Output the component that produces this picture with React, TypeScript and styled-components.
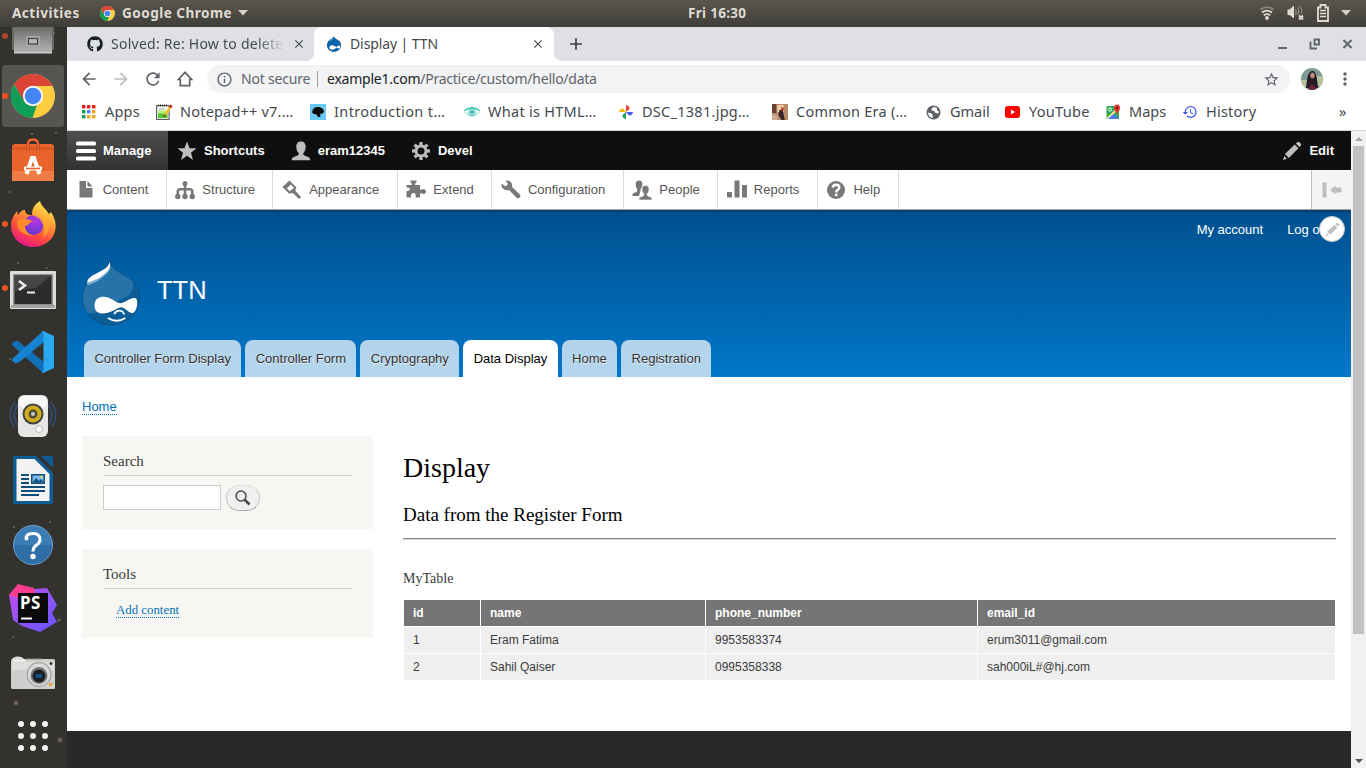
import React from "react";
import styled, { createGlobalStyle, css } from "styled-components";
import { FaGithub } from "react-icons/fa";
import {
  MdAdd,
  MdArrowBack,
  MdArrowForward,
  MdClose,
  MdHistory,
  MdInfoOutline,
  MdMoreVert,
  MdRefresh,
  MdStarBorder,
} from "react-icons/md";

const GlobalStyle = createGlobalStyle`
  *, *::before, *::after { box-sizing: border-box; }
  body { margin: 0; overflow: hidden; }
  svg { display: block; flex: none; }
`;

const ui = `"Noto Sans", "Open Sans", sans-serif`;
const sans = `"Liberation Sans", Arial, sans-serif`;
const serif = `"Liberation Serif", "Times New Roman", serif`;

/* ---------- desktop ---------- */

const Desktop = styled.div`
  width: 1366px;
  height: 768px;
  display: flex;
  flex-direction: column;
  overflow: hidden;
`;

const TopBar = styled.header`
  height: 27px;
  flex: none;
  display: grid;
  grid-template-columns: 676px auto 1fr;
  align-items: center;
  padding: 0 15px 1px 12px;
  color: #dfdbd2;
  font: bold 13.5px/26px ${ui};
  background: linear-gradient(#59564e, #403e39);
`;

const TopGroup = styled.div<{ $end?: boolean }>`
  display: flex;
  align-items: center;
  justify-content: ${(p) => (p.$end ? "flex-end" : "flex-start")};
`;

const Label = styled.span<{ $w: number; $ls?: number }>`
  display: block;
  flex: none;
  width: ${(p) => p.$w}px;
  letter-spacing: ${(p) => p.$ls ?? 0}px;
  white-space: nowrap;
`;

const Gap = styled.span<{ $w: number }>`
  flex: none;
  width: ${(p) => p.$w}px;
`;

const Workspace = styled.div`
  flex: 1;
  display: flex;
  min-height: 0;
`;

const Dock = styled.nav`
  width: 67px;
  flex: none;
  display: flex;
  flex-direction: column;
  background:
    radial-gradient(circle at 16px 676px, #6b625a 0 1.5px, transparent 3px),
    radial-gradient(circle at 60px 713px, #6b625a 0 1.5px, transparent 3px),
    radial-gradient(circle at 54px 6px, #67655f 0 0.7px, transparent 1.5px),
    radial-gradient(circle at 32px 107px, #67655f 0 0.7px, transparent 1.5px),
    radial-gradient(circle at 56px 106px, #5a5854 0 0.7px, transparent 1.5px),
    radial-gradient(circle at 10px 165px, #5a5854 0 0.7px, transparent 1.5px),
    radial-gradient(circle at 18px 236px, #5a5854 0 0.7px, transparent 1.5px),
    radial-gradient(circle at 47px 241px, #5a5854 0 0.7px, transparent 1.5px),
    radial-gradient(circle at 10px 332px, #5a5854 0 0.7px, transparent 1.5px),
    radial-gradient(circle at 50px 495px, #5a5854 0 0.7px, transparent 1.5px),
    radial-gradient(circle at 14px 500px, #5a5854 0 0.7px, transparent 1.5px),
    radial-gradient(circle at 59px 593px, #67655f 0 1px, transparent 2px),
    radial-gradient(circle at 13px 610px, #5a5854 0 0.7px, transparent 1.5px),
    #33322e;
`;

const DockSlot = styled.div<{ $short?: boolean; $active?: boolean; $running?: boolean; $drop?: number }>`
  position: relative;
  flex: none;
  height: ${(p) => (p.$short ? 37 : 64)}px;
  display: flex;
  justify-content: center;
  align-items: ${(p) => (p.$short ? "flex-start" : "center")};
  padding-right: 1px;
  padding-top: ${(p) => (p.$drop ?? 0) * 2}px;
  ${(p) =>
    p.$active &&
    css`
      background: #575653;
      background-clip: padding-box;
      border: 1px solid transparent;
      border-width: 1px 3px 1px 2px;
      border-radius: 5px;
    `}
  ${(p) =>
    p.$running &&
    css`
      &::before {
        content: "";
        position: absolute;
        left: ${p.$active ? 0 : 2}px;
        top: ${p.$short ? 6 : p.$active ? 28 : 29}px;
        width: 6px;
        height: 6px;
        border-radius: 50%;
        background: ${p.$short ? "#a8482b" : "#e95420"};
      }
    `}
`;

/* ---------- browser ---------- */

const Browser = styled.main`
  flex: 1;
  min-width: 0;
  display: flex;
  flex-direction: column;
  background: #fff;
`;

const TabStrip = styled.div`
  height: 34px;
  flex: none;
  display: flex;
  align-items: center;
  background: #dee0e6;
  font: 14px/34px ${ui};
  color: #45494d;
`;

const BrowserTab = styled.div<{ $active?: boolean }>`
  height: 34px;
  width: ${(p) => (p.$active ? 240 : 247)}px;
  display: flex;
  align-items: center;
  padding-left: ${(p) => (p.$active ? 12 : 20)}px;
  border-radius: ${(p) => (p.$active ? "8px 8px 0 0" : "0 0 8px 0")};
  background: ${(p) => (p.$active ? "#fff" : "#dee0e6")};
`;

const TabCorner = styled.div`
  height: 34px;
  width: 487px;
  flex: none;
  display: flex;
  background: linear-gradient(#dee0e6 50%, #fff 50%);
`;

const TabRest = styled.div`
  flex: 1;
  height: 34px;
  display: flex;
  align-items: center;
  padding: 0 13px 0 12px;
  border-radius: 0 0 0 8px;
  background: #dee0e6;
`;

const TabRestWrap = styled.div`
  flex: 1;
  display: flex;
  background: linear-gradient(#dee0e6 50%, #fff 50%);
`;

const FadedLabel = styled(Label)`
  overflow: hidden;
  mask-image: linear-gradient(90deg, #000 84%, transparent);
`;

const Spacer = styled.span`
  flex: 1;
`;

const Toolbar = styled.div`
  height: 36px;
  flex: none;
  display: flex;
  align-items: center;
  padding: 0 11px 0 12px;
  color: #5f6368;
`;

const NavIcons = styled.div`
  display: flex;
  gap: 12px;
  width: 128px;
  align-items: center;
  svg:last-child {
    margin-left: 2px;
  }
`;

const Omnibox = styled.div`
  flex: none;
  width: 1083px;
  height: 28px;
  border-radius: 14px;
  background: #f1f3f4;
  display: flex;
  align-items: center;
  padding: 0 10px 0 9px;
  font: 14px/28px ${ui};
`;

const Divider = styled.span`
  width: 1px;
  height: 16px;
  margin: 0 9px 0 7px;
  background: #9a9da1;
`;

const UrlHost = styled.span`
  color: #202124;
`;

const Bookmarks = styled.div`
  height: 34px;
  flex: none;
  display: flex;
  align-items: center;
  padding: 0 19px 3px 15px;
  border-bottom: 1px solid #d5d9d8;
  font: 14.5px/28px ${ui};
  color: #45494d;
`;

const Bookmark = styled.div<{ $w: number; $gap: number }>`
  flex: none;
  width: ${(p) => p.$w}px;
  display: flex;
  align-items: center;
  gap: ${(p) => p.$gap}px;
  white-space: nowrap;
`;

const BookmarkLabel = styled(Label)`
  padding-bottom: 2px;
`;

const Viewport = styled.div`
  flex: 1;
  min-height: 0;
  display: flex;
`;

const Page = styled.div`
  flex: 1;
  min-width: 0;
  display: flex;
  flex-direction: column;
  font-family: ${sans};
`;

const ScrollBar = styled.div`
  width: 15px;
  flex: none;
  display: flex;
  flex-direction: column;
  align-items: center;
  justify-content: space-between;
  background: #f1f1f1;
`;

const Thumb = styled.div`
  width: 11px;
  height: 488px;
  margin: 0 0 auto;
  background: #c1c1c1;
`;

const ScrollArrow = styled.div`
  height: 15px;
  display: flex;
  align-items: center;
`;

/* ---------- admin toolbar ---------- */

const AdminBar = styled.div`
  height: 39px;
  flex: none;
  display: flex;
  background: #0f0f0f;
  color: #fff;
  font: bold 13px/39px ${sans};
`;

const AdminItem = styled.div<{ $active?: boolean; $w?: number }>`
  display: flex;
  align-items: center;
  gap: 7px;
  padding: 0 17px 0 9px;
  width: ${(p) => (p.$w ? p.$w + "px" : "auto")};
  flex: none;
  ${(p) => p.$active && "background: linear-gradient(#4f4f4f, #323232);"}
`;

const Tray = styled.div`
  position: relative;
  z-index: 1;
  height: 40px;
  flex: none;
  display: flex;
  background: #fff;
  border-bottom: 1px solid #a5a59f;
  box-shadow: 0 0 4px 1px rgba(0, 0, 0, 0.33);
  clip-path: inset(0 0 -6px 0);
  color: #565656;
  font: 13px/39px ${sans};
`;

const TrayItem = styled.div`
  display: flex;
  align-items: center;
  gap: 7.08px;
  padding: 0 17.33px 0 8.67px;
  border-right: 1px solid #ddd;
`;

const TrayToggle = styled.div`
  width: 40px;
  margin-left: auto;
  display: flex;
  align-items: center;
  justify-content: center;
  background: #f5f5f5;
  border-left: 1px solid #bfbfba;
`;

/* ---------- site ---------- */

const SiteHeader = styled.header`
  height: 167px;
  flex: none;
  display: flex;
  flex-direction: column;
  background: linear-gradient(#00508f, #0077c8);
  color: #fff;
`;

const AccountMenu = styled.div`
  position: relative;
  height: 40px;
  display: flex;
  justify-content: flex-end;
  gap: 24px;
  padding-right: 20.5px;
  font: 13px/40px ${sans};
`;

const ContextButton = styled.div`
  position: absolute;
  right: 6px;
  top: 6px;
  width: 26px;
  height: 26px;
  border-radius: 50%;
  border: 1px solid #ccc;
  background: #fff;
  display: flex;
  align-items: center;
  justify-content: center;
`;

const Branding = styled.div`
  height: 90px;
  display: flex;
  padding: 11px 0 0 14.5px;
  gap: 17.5px;
`;

const SiteName = styled.div`
  font: 25.5px/30px ${sans};
  padding-top: 14px;
`;

const MainMenu = styled.nav`
  display: flex;
  gap: 4px;
  padding-left: 17px;
  height: 37px;
`;

const MenuTab = styled.div<{ $active?: boolean }>`
  padding: 0 10.4px;
  border-radius: 8px 8px 0 0;
  background: ${(p) => (p.$active ? "#fff" : "rgba(255, 255, 255, 0.7)")};
  color: ${(p) => (p.$active ? "#000" : "#333")};
  text-shadow: ${(p) => (p.$active ? "none" : "0 1px #eee")};
  font: 13px/38px ${sans};
`;

const Body = styled.div`
  height: 354px;
  flex: none;
  display: flex;
  flex-direction: column;
  background: #fff;
  padding: 0 15px;
  color: #3b3b3b;
`;

const Breadcrumb = styled.div`
  height: 59px;
  padding-top: 22px;
  font: 13px/15px ${sans};
`;

const DottedLink = styled.span`
  display: inline-block;
  color: #0071b3;
  border-bottom: 1px dotted #0071b3;
`;

const Columns = styled.div`
  display: flex;
  gap: 30px;
`;

const Sidebar = styled.aside`
  width: 291px;
  flex: none;
  display: flex;
  flex-direction: column;
  gap: 20px;
`;

const Block = styled.section<{ $h: number }>`
  height: ${(p) => p.$h}px;
  padding: 15px 21px;
  background: #f6f6f2;
  font: 12.85px/15px ${serif};
`;

const BlockTitle = styled.h2`
  margin: 0 0 9px;
  height: 25px;
  border-bottom: 1px solid #d3d3d1;
  font: 15px/20px ${serif};
`;

const SearchRow = styled.div`
  display: flex;
  gap: 5px;
`;

const SearchInput = styled.input`
  width: 118px;
  height: 25px;
  padding: 4px;
  border: 1px solid #ccc;
  background: #fff;
`;

const SearchButton = styled.button`
  width: 34px;
  height: 26px;
  padding: 0 1px 1px 0;
  display: flex;
  align-items: center;
  justify-content: center;
  border: 1px solid #ccc;
  border-color: #e0e0e0 #c8c8c8 #a9a9a9;
  border-radius: 13px;
  background: #f0f0f0;
`;

const ToolLink = styled.div`
  padding: 5px 0 0 13px;
  line-height: 14px;
`;

const Content = styled.section`
  flex: 1;
  font-family: ${serif};
`;

const PageTitle = styled.h1`
  margin: 0;
  padding-top: 15px;
  font: 28px/34px ${serif};
  color: #000;
`;

const SubTitle = styled.h2`
  margin: 0;
  padding-top: 19px;
  height: 53px;
  font: 19px/22px ${serif};
  color: #000;
`;

const Rule = styled.hr`
  margin: 0;
  height: 2px;
  border: 0;
  border-top: 1px solid #848484;
  border-bottom: 1px solid #d8d8d8;
`;

const TableCaption = styled.div`
  padding-top: 29px;
  height: 59px;
  font: 14px/20px ${serif};
`;

const Grid = styled.table`
  width: 933px;
  table-layout: fixed;
  border-spacing: 1px;
  font: 12px/14px ${sans};
  th,
  td {
    height: 26px;
    padding: 0 9px;
    text-align: left;
    vertical-align: middle;
  }
  th {
    background: #757575;
    color: #fff;
  }
  td {
    background: #efefef;
  }
`;

const Footer = styled.footer`
  flex: 1;
  background: #292929;
`;

/* ---------- drawings ---------- */

const ChromeIcon = ({ size }: { size: number }) => (
  <svg width={size} height={size} viewBox="0 0 44 44">
    <circle cx="22" cy="22" r="22" fill="#ffcd40" />
    <path d="M22 0A22 22 0 0 1 41.5 12H22L12.5 27 3.2 10.5A22 22 0 0 1 22 0Z" fill="#db4437" />
    <path d="M3.2 10.5 13.3 27.5A10 10 0 0 0 26 31L21.5 44A22 22 0 0 1 3.2 10.5Z" fill="#0f9d58" />
    <circle cx="22" cy="22" r="10.2" fill="#f4f4f4" />
    <circle cx="22" cy="22" r="8.2" fill="#4285f4" />
  </svg>
);

const FilesIcon = () => (
  <svg width="42" height="27" viewBox="0 0 42 27">
    <defs>
      <linearGradient id="files" x1="0" y1="0" x2="0" y2="1">
        <stop offset="0" stopColor="#6c6c6a" />
        <stop offset="1" stopColor="#b5b5b4" />
      </linearGradient>
    </defs>
    <path d="M0 0H42V23H0Z" fill="#666664" />
    <path d="M2 0H40V26H2Z" fill="url(#files)" />
    <path d="M2 25H40V26.5H2Z" fill="#d0d0d0" />
    <rect x="14" y="9" width="14" height="11" rx="2" fill="#a8a8a6" />
    <rect x="16.5" y="11.5" width="9" height="5.5" fill="#b9b9b7" stroke="#3c3c3a" strokeWidth="1.2" />
  </svg>
);

const SoftwareIcon = () => (
  <svg width="42" height="44" viewBox="0 0 42 44">
    <path d="M0 8 2 6H40L42 8V43H0Z" fill="#e8642b" />
    <path d="M0 9H42V12H0Z" fill="#d95a22" />
    <path d="M0 33H42V43H0Z" fill="#ef7d45" />
    <path d="M16 13V6Q16 1.500 21 1.500T26 6V13" fill="none" stroke="#b8441a" strokeWidth="3" />
    <path d="M16 13V6Q16 1.500 21 1.500T26 6V13" fill="none" stroke="#f0703a" strokeWidth="1.400" />
    <path d="M14.500 36 20 20H22L27.500 36" fill="none" stroke="#fff" strokeWidth="4" />
    <path d="M12 30.500H30" stroke="#fff" strokeWidth="4" />
    <path d="M14 30.500H28" stroke="#e8642b" strokeWidth="1.600" />
  </svg>
);

const FirefoxIcon = () => (
  <svg width="45" height="46" viewBox="0 0 45 46">
    <defs>
      <linearGradient id="fox" x1="0.8" y1="0" x2="0.3" y2="1">
        <stop offset="0" stopColor="#fff44f" />
        <stop offset="0.35" stopColor="#ffa436" />
        <stop offset="0.7" stopColor="#ff4a3d" />
        <stop offset="1" stopColor="#e5148f" />
      </linearGradient>
      <radialGradient id="globe" cx="0.6" cy="0.3" r="0.8">
        <stop offset="0" stopColor="#b833e1" />
        <stop offset="1" stopColor="#5a3ad0" />
      </radialGradient>
    </defs>
    <path d="M29 0C30 5 35 8 38 13L40 11C46 20 46 29 41 37 36 43 29 46 22 46 9 46 0 36 0 25 0 17 4 13 6 10L7 14C10 10 11 9 14 9 14 12 16 14 21 14 21 7 24 3 29 0Z" fill="url(#fox)" />
    <circle cx="22.500" cy="24" r="10" fill="url(#globe)" />
    <path d="M6 21C10 16 15 18 22 20 18 21 19 24 14 25 14 30 18 34 23 34.500 16 36 9 31 7 27 5 25 6 21Z" fill="#ff8a2a" />
    <path d="M21 14C28 12 38 17 38 25 38 30 35 35 31 37 34 32 34 26 31 22 29 17 25 16 21 14Z" fill="#ffb02e" opacity="0.700" />
  </svg>
);

const TerminalIcon = () => (
  <svg width="46" height="38" viewBox="0 0 46 38">
    <rect x="0" y="0" width="46" height="38" rx="1" fill="#dcdcdc" />
    <rect x="1" y="34" width="44" height="3" fill="#a4a4a2" />
    <rect x="3" y="3" width="40" height="31" fill="#8f908e" />
    <rect x="4.500" y="4.500" width="37" height="28.500" fill="#2a2b2a" />
    <path d="M4.500 4.500H41.500L26 17 4.500 20Z" fill="#444645" />
    <path d="M9 10 15 14.500 9 19" fill="none" stroke="#eee" strokeWidth="2.500" />
    <path d="M17 21.500H25" stroke="#eee" strokeWidth="2" />
  </svg>
);

const CodeIcon = () => (
  <svg width="42" height="42" viewBox="0 0 42 42">
    <path d="M0 12.500 3 10 6 10 32 31V42L30 41 0 14Z" fill="#0f70b7" />
    <path d="M0 29.500 3 32 6 32 32 11V0L30 1 0 28Z" fill="#1583cf" />
    <path d="M31 0 42 5V37L31 42 29.500 41 31.500 40V2L29.500 1Z" fill="#29a9f2" />
  </svg>
);

const SpeakerIcon = () => (
  <svg width="48" height="44" viewBox="0 0 48 44">
    <path d="M6 8Q-3 20 5 33M42 8Q51 20 43 33M9 10Q2 20 8 31M39 10Q46 20 40 31" fill="none" stroke="#344766" strokeWidth="2" />
    <rect x="9" y="1" width="30" height="42" rx="6" fill="#e6e6e4" />
    <rect x="10" y="2" width="28" height="12" rx="5" fill="#f8f8f8" />
    <circle cx="24" cy="20" r="10.500" fill="#444" />
    <circle cx="24" cy="20" r="8.500" fill="#d2ad1b" />
    <circle cx="24" cy="20" r="4.500" fill="#514b38" />
    <circle cx="24" cy="20" r="2" fill="#c9c9c9" />
    <circle cx="30" cy="35" r="3.500" fill="#fafafa" stroke="#b7b7b7" />
  </svg>
);

const WriterIcon = () => (
  <svg width="40" height="48" viewBox="0 0 40 48">
    <path d="M2 0H23L40 17V46Q40 48 38 48H2Q0 48 0 46V2Q0 0 2 0Z" fill="#0d5c93" />
    <path d="M28 0H38Q40 0 40 2V12Z" fill="#0d5c93" />
    <path d="M3.500 3H21.500L36.500 18V45H3.500Z" fill="#f2f2f2" />
    <path d="M8 19H16M8 23H16M8 27H16M8 31H32M8 35H32M8 39H26" stroke="#124f79" strokeWidth="2" />
    <rect x="18" y="18" width="14" height="10" fill="#124f79" />
    <rect x="19.500" y="19.500" width="11" height="7" fill="#76b9e8" />
    <path d="M19.500 26.500 23 22 26 25 28 23 30.500 26.500Z" fill="#124f79" />
    <circle cx="28.500" cy="21" r="1.200" fill="#f3d44a" />
  </svg>
);

const HelpIcon = () => (
  <svg width="40" height="40" viewBox="0 0 40 40">
    <circle cx="20" cy="20" r="19.500" fill="#3b7db5" stroke="#6fa3cc" />
    <path d="M1 20A19 19 0 0 0 39 20Z" fill="#2f6ea5" />
    <path d="M13 13Q13.500 8.500 20 8.500 27 8.500 27 14.500 27 18 23 20.500 20 22.500 20 26.500" fill="none" stroke="#fff" strokeWidth="3" />
    <circle cx="13.500" cy="13.500" r="2" fill="#fff" />
    <circle cx="20" cy="31.500" r="2.700" fill="#fff" />
  </svg>
);

const StormIcon = () => (
  <svg width="48" height="48" viewBox="0 0 48 48">
    <defs>
      <linearGradient id="storm" x1="0" y1="0" x2="0.8" y2="1">
        <stop offset="0" stopColor="#c44de8" />
        <stop offset="1" stopColor="#6b57ff" />
      </linearGradient>
    </defs>
    <path d="M0 11 9 1 25 5 38 4 48 21 43 29 48 38 31 48 13 42 4 36Z" fill="url(#storm)" />
    <path d="M0 11 9 0 25 4 26 12H9V14Z" fill="#fb3b8e" />
    <rect x="9" y="9" width="30" height="30" fill="#0a0a0a" />
    <text x="11" y="25" fontFamily="Noto Sans, sans-serif" fontWeight="bold" fontSize="17" letterSpacing="0.500" fill="#fff">PS</text>
    <path d="M12 34.500H23" stroke="#fff" strokeWidth="2" />
  </svg>
);

const CameraIcon = () => (
  <svg width="44" height="34" viewBox="0 0 44 34">
    <ellipse cx="7" cy="3.500" rx="6" ry="3" fill="#ddd" />
    <rect x="0" y="3" width="44" height="30" rx="1.500" fill="#cfcfcd" />
    <rect x="1" y="6" width="42" height="8" fill="#dededc" />
    <path d="M2 4.500H14" stroke="#f5f5f5" strokeWidth="2" />
    <path d="M15 3H31" stroke="#8a8a88" />
    <circle cx="28" cy="18.500" r="12.500" fill="#a0a09f" />
    <circle cx="28" cy="18.500" r="11.200" fill="#dadada" />
    <circle cx="28" cy="19.500" r="8.500" fill="#777" />
    <circle cx="28" cy="20" r="6.500" fill="#1b1d22" />
    <path d="M24.500 18H31V22H24.500Z" fill="#174b84" />
    <circle cx="40" cy="7.500" r="1.500" fill="#333" />
    <rect x="38" y="27" width="3" height="3" fill="#e9a03a" />
  </svg>
);

const AppGridIcon = () => (
  <svg width="30" height="30" viewBox="0 0 30 30" fill="#f2f2f2">
    {[3, 15, 27].map((y) => [3, 15, 27].map((x) => <circle key={`${x}-${y}`} cx={x} cy={y} r="3" />))}
  </svg>
);

const Caret = () => (
  <svg width="10" height="6" viewBox="0 0 10 6">
    <path d="M0 0H10L5 5.500Z" fill="#d5d1c8" />
  </svg>
);

const WifiIcon = () => (
  <svg width="14" height="14" viewBox="0 0 14 14" fill="none" stroke="#dfdbd2" strokeWidth="1.700">
    <path d="M0.500 3.500Q7-1 13.500 3.500" stroke="#8c8981" />
    <path d="M2 6.500Q7 2.800 12 6.500M3.800 9.200Q7 7 10.200 9.200" />
    <circle cx="7" cy="12" r="1.900" fill="#dfdbd2" stroke="none" />
  </svg>
);

const VolumeIcon = () => (
  <svg width="17" height="16" viewBox="0 0 17 16">
    <path d="M0.500 4.500H2.500L7 0.500V13.500L2.500 10H0.500Z" fill="#dfdbd2" />
    <path d="M8.500 4Q10 7 8.500 10M10.500 2Q13 7 10.500 10M12.500 0.500Q16 5 14 9" fill="none" stroke="#8c8981" strokeWidth="1.200" />
    <path d="M12 10.500 16 14.500M16 10.500 12 14.500" stroke="#dfdbd2" strokeWidth="2" />
  </svg>
);

const BatteryIcon = () => (
  <svg width="12" height="18" viewBox="0 0 12 18">
    <path d="M3.500 1H8.500V3.500H11V17H1V3.500H3.500Z" fill="none" stroke="#dfdbd2" strokeWidth="1.800" />
    <path d="M3 6.500H9M3 9.500H9M3 12.500H9" stroke="#dfdbd2" strokeWidth="1.400" />
  </svg>
);

const HomeIcon = () => (
  <svg width="16" height="16" viewBox="0 0 16 16">
    <path d="M1.300 8.500 8 1.300 14.700 8.500H12.700V14.700H3.300V8.500Z" fill="none" stroke="#5f6368" strokeWidth="1.700" />
  </svg>
);

const dropPath =
  "M27 0C28 5 32 8.500 38 12 51 19 57 25 57 36 57 52 44 64 28.500 64 12 64 0 52 0 36 0 24 8 17 16 12 22 8 26 6 27 0Z";

const DropIcon = () => (
  <svg width="16" height="16" viewBox="-4 0 65 64">
    <path d={dropPath} fill="#0a62a8" />
    <path d="M10 46C10 36 22 34 38 44 50 35 55 38 53 46 50 54 44 49 38 46 27 58 10 58 10 46Z" fill="#fff" />
    <path d="M6 20 27 6 20 17Z" fill="#69aee0" />
  </svg>
);

const DropLogo = () => (
  <svg width="58" height="65" viewBox="-0.500 0 58 65">
    <defs>
      <clipPath id="drop">
        <path d={dropPath} />
      </clipPath>
    </defs>
    <path d={dropPath} fill="#0c5c95" />
    <g clipPath="url(#drop)">
      <path d="M-2 -2H50C53 20 52 36 42 37L26 44Q16 54 4 52H-2Z" fill="#2573a9" />
      <path d="M50 18C53 30 46 35 42 37L58 40V20Z" fill="#0c5c95" />
    </g>
    <path d={dropPath} fill="none" stroke="#0f4f83" strokeWidth="0.800" />
    <path d="M27 1C28.500 6 28 9 25 12 19 18 11 23 5 24 3 20 8 15 15 12 21 8.500 26 7 27 1Z" fill="#86b0cf" />
    <path d="M27 1C28 6 27 8.500 24 11 18 17 11 20 5 21.500 4.500 18 9 14.500 15 12 21 8.500 26 7 27 1Z" fill="#fff" />
    <path d="M12 44.500C12 34 23 34 30 38.500 36 42.500 38 43 42 41 46 38.500 50 36.500 53 37 56 39 55 47 52 51 49 54 46 50 41 47 38 45 35 48 30 50 22 54 12 54 12 44.500Z" fill="#fff" />
    <path d="M31.500 53Q35 48 40 50.500L42 53.500" fill="none" stroke="#fff" strokeWidth="1.600" />
    <path d="M25.500 57Q34 62.500 43 57" fill="none" stroke="#fff" strokeWidth="1.800" />
  </svg>
);

const AppsGlyph = () => {
  const colors = ["#ea1b1b", "#ea1b1b", "#ea1b1b", "#0f9d58", "#4285f4", "#f4a71c", "#0f9d58", "#f4a71c", "#f4a71c"];
  return (
    <svg width="14" height="14" viewBox="0 0 14 14">
      {colors.map((c, i) => (
        <rect key={i} x={(i % 3) * 5} y={Math.floor(i / 3) * 5} width="3.400" height="3.400" fill={c} />
      ))}
    </svg>
  );
};

const NotepadGlyph = () => (
  <svg width="17" height="16" viewBox="0 0 17 16">
    <rect x="0.600" y="1.600" width="12.500" height="13.800" fill="#f4f8ec" stroke="#4a4a4a" />
    <path d="M2 6.500H11.500V14H2Z" fill="#b6f07a" />
    <path d="M2 9.500H11.500V14H2Z" fill="#4fc832" />
    <path d="M2 1.500H12" stroke="#333" strokeWidth="2" strokeDasharray="1 1" />
    <path d="M3 5H9" stroke="#999" strokeWidth="0.800" />
    <path d="M8 12.500 14 3.500" stroke="#f1c232" strokeWidth="2.400" />
    <path d="M8 12.500 9 11" stroke="#333" strokeWidth="2" />
    <path d="M14 3.500 15.500 1.200" stroke="#d22" strokeWidth="2.800" />
  </svg>
);

const HeadGlyph = () => (
  <svg width="16" height="16" viewBox="0 0 16 16">
    <rect width="16" height="16" fill="#69c9f5" />
    <path d="M2 8.500C3 4 5 3 8 3 11 2.500 14 5 14 8L12.500 9.500 10 10 10.500 13H8L6.500 10.500 4 10Z" fill="#0a0a0a" />
  </svg>
);

const EyeGlyph = () => (
  <svg width="16" height="10" viewBox="0 0 16 10" fill="none" stroke="#35bdb2">
    <path d="M0 4Q8-2.500 16 4" strokeWidth="1.300" />
    <circle cx="8" cy="5" r="3.300" />
    <circle cx="8" cy="5" r="1.500" fill="#35bdb2" />
    <path d="M1 5Q4 9 8 9T15 5" strokeWidth="0.600" />
  </svg>
);

const PhotosGlyph = () => (
  <svg width="14" height="14" viewBox="0 0 14 14">
    <path d="M7 7V0Q11 1 10.500 4Z" fill="#ea4335" />
    <path d="M7 7H14Q13 11 10 10.500Z" fill="#4759f5" />
    <path d="M7 7V14Q3 13 3.500 10Z" fill="#21a35a" />
    <path d="M7 7H0Q1 3 4 3.500Z" fill="#fbbc05" />
  </svg>
);

const PaintingGlyph = () => (
  <svg width="16" height="16" viewBox="0 0 15 16" preserveAspectRatio="none">
    <rect width="15" height="16" fill="#b98a68" />
    <path d="M0 0H4V9H0Z" fill="#6b3f31" />
    <path d="M5 1H11V8H5Z" fill="#ecd0a2" />
    <path d="M7 6H10L12 16H9L6 11Z" fill="#33262a" />
    <path d="M8.500 3.500H11V6.500H8.500Z" fill="#c0392b" />
    <path d="M0 11H5V16H0Z" fill="#cfae92" />
  </svg>
);

const GlobeGlyph = () => (
  <svg width="15" height="15" viewBox="0 0 15 15">
    <circle cx="7.500" cy="7.500" r="7" fill="#5f6368" />
    <path d="M8.500 1.800 5.800 3.200 5.500 5.500 8 5.800 9.500 8 12.500 8.500 13 6.500 11 5.500 11 3.200Z" fill="#fff" />
    <path d="M1.600 7.500 5 8.200 6.800 10 6.500 13.200 3.500 11.700Z" fill="#fff" />
  </svg>
);

const TubeGlyph = () => (
  <svg width="15" height="12" viewBox="0 0 14 11">
    <rect width="14" height="11" rx="2.500" fill="#f00" />
    <path d="M5.500 3.200 9.500 5.500 5.500 7.800Z" fill="#fff" />
  </svg>
);

const MapsGlyph = () => (
  <svg width="15" height="16" viewBox="0 0 15 16">
    <rect x="0.500" y="2" width="12.500" height="13" rx="1" fill="#31a853" />
    <path d="M1 15 7 9 13 15Z" fill="#4c7df0" />
    <path d="M0.500 14 12 3 13 5 2 15Z" fill="#f5e6a0" />
    <path d="M11 0.500C8 0.500 7.500 4 8.500 6L11 10 13.500 6C15 4 14 0.500 11 0.500Z" fill="#e8372c" />
    <circle cx="11" cy="4" r="1.200" fill="#7b1410" />
    <circle cx="4" cy="5.500" r="1.600" fill="none" stroke="#fff" />
  </svg>
);

const Avatar = () => (
  <svg width="22" height="22" viewBox="0 0 22 22">
    <defs>
      <clipPath id="face">
        <circle cx="11" cy="11" r="11" />
      </clipPath>
    </defs>
    <g clipPath="url(#face)">
      <rect width="22" height="22" fill="#7f9c94" />
      <path d="M0 12H6V22H0ZM16 8H22V18H16Z" fill="#b6c3a0" />
      <path d="M5 20C6 10 7 3 11.500 3 15 3 16 9 17 20Z" fill="#251d23" />
      <ellipse cx="11.500" cy="7.500" rx="2.200" ry="3" fill="#bb8d7f" />
      <path d="M7 22Q11 11 16 22Z" fill="#6a2040" />
    </g>
  </svg>
);

const MenuBars = () => (
  <svg width="20" height="20" viewBox="0 0 20 20" fill="#fff">
    <rect y="0.500" width="20" height="4" rx="1.500" />
    <rect y="8" width="20" height="4" rx="1.500" />
    <rect y="15.500" width="20" height="4" rx="1.500" />
  </svg>
);

const StarGlyph = () => (
  <svg width="20" height="20" viewBox="0 0 20 20" fill="#bebebe">
    <path d="M10 0.500 12.600 7.200H19.500L14 11.700 16 19 10 14.700 4 19 6 11.700 0.500 7.200H7.400Z" />
  </svg>
);

const PersonGlyph = () => (
  <svg width="20" height="20" viewBox="0 0 20 20" fill="#bebebe">
    <path d="M10 0.500C13 0.500 14.800 2.500 14.700 6 14.600 9 13.500 11 12.200 12.300 12 14 13 14.500 15.500 15.200 18 16 19.300 17 19.300 19.300H0.700C0.700 17 2 16 4.500 15.200 7 14.500 8 14 7.800 12.300 6.500 11 5.400 9 5.300 6 5.200 2.500 7 0.500 10 0.500Z" />
  </svg>
);

const GearGlyph = () => (
  <svg width="20" height="20" viewBox="0 0 20 20" fill="none" stroke="#bebebe">
    <circle cx="10" cy="10" r="5" strokeWidth="3" />
    {[0, 45, 90, 135, 180, 225, 270, 315].map((a) => (
      <path key={a} d="M10 4.500V1" strokeWidth="3.200" transform={`rotate(${a} 10 10)`} />
    ))}
  </svg>
);

const PencilGlyph = ({ size }: { size: number }) => (
  <svg width={size} height={size} viewBox="0 0 20 20" fill="#bebebe">
    <path d="M13.800 2.500 15.300 1.200Q16.500 0.400 17.700 1.500L18.700 2.600Q19.600 3.800 18.600 4.900L17.400 6.100ZM12.700 3.500 16.400 7.200 6.900 17 2.900 13.100ZM2.300 15 5 17.700 1 19Z" />
  </svg>
);

const trayGlyphs: Record<string, React.ReactNode> = {
  Content: <path d="M3.500 1H10V8H16.500V17.500H3.500ZM11.500 1 16.500 6.500H11.500Z" />,
  Structure: (
    <>
      <circle cx="10" cy="3.500" r="2.500" />
      <circle cx="2.800" cy="16.500" r="2.700" />
      <circle cx="10" cy="16.500" r="2.700" />
      <circle cx="17.200" cy="16.500" r="2.700" />
      <path d="M10 4V15M2.800 15V11.500Q2.800 9.300 5 9.300H15Q17.200 9.300 17.200 11.500V15" fill="none" stroke="#787878" strokeWidth="2.600" />
    </>
  ),
  Appearance: (
    <path fillRule="evenodd" d="M7.500 0.500 14.500 7.500Q13 9.500 13.500 11L19 17 17 19 11.500 13.500Q9 12.500 7.500 14L0.500 7ZM9 4.500 4.800 8.300 7.500 11.300Q9 10 12 8Z" />
  ),
  Extend: (
    <path d="M0.500 5H6L5.500 3 4.500 2.500V0.500H10.500V2.500L9.500 3 9 5H14V9.500L16 9.800Q17 8.500 18.500 9.200 20 10 20 11.500T18.500 13.800Q17 14.500 16 13.200L14 13.500V17.500H9.500Q10.500 13 7.500 13T5 17.500H0.500V11Q4 11 4 9T0.500 7.500Z" />
  ),
  Configuration: (
    <path d="M4.500 0.500Q8.500 0 10.500 3 11.500 5 11 7L19 14.500Q20 16 18.800 17.500 17.500 18.800 15.800 18L8 10Q4 11 2 8.500 0 6.500 0.500 3.500L4.500 6.500 7 4Z" />
  ),
  People: (
    <>
      <path d="M7 0.500C9.500 0.500 10.500 2 10.400 4.500 10.300 6.500 9.500 8 8.500 9V11L7 16H0.500C0.500 13 1.500 13 4.500 12 6 11 5 9 4.500 8 3.500 6 2.700 0.500 7 0.500Z" />
      <path d="M13.500 5.500C16 5.500 17 7 17 9.500 17 11.500 16 13 15 14 15 16 16 16 18 16.800 19.700 17.500 20 18 20 20H7C7 18 7.500 17.500 9 16.800 11 16 12 16 12 14 11 13 10 11.500 10 9.500 10 7 11 5.500 13.500 5.500Z" stroke="#fff" strokeWidth="0.600" />
    </>
  ),
  Reports: <path d="M0 12H5V17.500H0ZM7.500 0.500H12.500V17.500H7.500ZM15 5H20V17.500H15Z" />,
  Help: (
    <>
      <circle cx="10" cy="10" r="9" />
      <path d="M6.700 7.500Q7 4.800 10.200 4.800 13.300 5 13.300 7.500 13.300 9 11.500 10 10.200 11 10.200 12.500" fill="none" stroke="#fff" strokeWidth="2.400" />
      <rect x="8.900" y="13.700" width="2.600" height="2.400" fill="#fff" />
    </>
  ),
};

const trayItems = ["Content", "Structure", "Appearance", "Extend", "Configuration", "People", "Reports", "Help"];

const menuItems = ["Controller Form Display", "Controller Form", "Cryptography", "Data Display", "Home", "Registration"];

const bookmarks: { label: string; icon: React.ReactNode; w: number; gap: number; ls: number }[] = [
  { label: "Apps", icon: <AppsGlyph />, w: 74, gap: 9, ls: 0.2 },
  { label: "Notepad++ v7.…", icon: <NotepadGlyph />, w: 154, gap: 7, ls: 0.2 },
  { label: "Introduction t…", icon: <HeadGlyph />, w: 154, gap: 8, ls: 0.38 },
  { label: "What is HTML…", icon: <EyeGlyph />, w: 155, gap: 8, ls: 0.27 },
  { label: "DSC_1381.jpg…", icon: <PhotosGlyph />, w: 153, gap: 9, ls: 0.27 },
  { label: "Common Era (…", icon: <PaintingGlyph />, w: 154, gap: 8, ls: 0.25 },
  { label: "Gmail", icon: <GlobeGlyph />, w: 79, gap: 9, ls: 0 },
  { label: "YouTube", icon: <TubeGlyph />, w: 101, gap: 9, ls: 0.3 },
  { label: "Maps", icon: <MapsGlyph />, w: 76, gap: 8, ls: 0 },
  { label: "History", icon: <MdHistory size={16} color="#3b55e6" />, w: 90, gap: 8, ls: 0.2 },
];

const rows = [
  ["1", "Eram Fatima", "9953583374", "erum3011@gmail.com"],
  ["2", "Sahil Qaiser", "0995358338", "sah000iL#@hj.com"],
];

export default function App() {
  return (
    <Desktop>
      <GlobalStyle />
      <TopBar>
        <TopGroup>
          <Label $w={88} $ls={0.5}>Activities</Label>
          <ChromeIcon size={15} />
          <Gap $w={7} />
          <Label $w={116} $ls={0.5}>Google Chrome</Label>
          <Caret />
        </TopGroup>
        <Label $w={58} $ls={0.3}>Fri 16:30</Label>
        <TopGroup $end>
          <WifiIcon />
          <Gap $w={13} />
          <VolumeIcon />
          <Gap $w={13} />
          <BatteryIcon />
          <Gap $w={12} />
          <Caret />
        </TopGroup>
      </TopBar>
      <Workspace>
        <Dock>
          <DockSlot $short $running><FilesIcon /></DockSlot>
          <DockSlot $active $running><ChromeIcon size={44} /></DockSlot>
          <DockSlot><SoftwareIcon /></DockSlot>
          <DockSlot $running><FirefoxIcon /></DockSlot>
          <DockSlot $running $drop={2}><TerminalIcon /></DockSlot>
          <DockSlot><CodeIcon /></DockSlot>
          <DockSlot><SpeakerIcon /></DockSlot>
          <DockSlot><WriterIcon /></DockSlot>
          <DockSlot $drop={1}><HelpIcon /></DockSlot>
          <DockSlot><StormIcon /></DockSlot>
          <DockSlot $drop={1}><CameraIcon /></DockSlot>
          <DockSlot><AppGridIcon /></DockSlot>
        </Dock>
        <Browser>
          <TabStrip>
            <TabCorner>
              <BrowserTab>
                <FaGithub size={16} color="#1b1f23" />
                <Gap $w={8} />
                <FadedLabel $w={174} $ls={0.25}>Solved: Re: How to delete</FadedLabel>
                <Gap $w={7} />
                <MdClose size={14} />
              </BrowserTab>
              <BrowserTab $active>
                <DropIcon />
                <Gap $w={8} />
                <Label $w={181} $ls={-0.1}>Display | TTN</Label>
                <MdClose size={14} />
              </BrowserTab>
            </TabCorner>
            <TabRestWrap>
              <TabRest>
                <MdAdd size={20} color="#3c4043" />
                <Spacer />
                <svg width="75" height="14" viewBox="0 0 75 14" fill="none" stroke="#5f6368" strokeWidth="2">
                  <path d="M0 11H9" />
                  <path d="M36.500 2.500H41V7.500H36.500ZM32.500 4.500V11.500H39" strokeWidth="1.800" />
                  <path d="M65.500 3 73.500 11M73.500 3 65.500 11" />
                </svg>
              </TabRest>
            </TabRestWrap>
          </TabStrip>
          <Toolbar>
            <NavIcons>
              <MdArrowBack size={20} />
              <MdArrowForward size={20} color="#bcbec1" />
              <MdRefresh size={20} />
              <HomeIcon />
            </NavIcons>
            <Omnibox>
              <MdInfoOutline size={17} color="#5f6368" />
              <Gap $w={8} />
              <Label $w={69} $ls={-0.2}>Not secure</Label>
              <Divider />
              <Label $w={300} $ls={-0.24}>
                <UrlHost>example1.com</UrlHost>/Practice/custom/hello/data
              </Label>
              <Spacer />
              <MdStarBorder size={17} />
            </Omnibox>
            <Spacer />
            <Avatar />
            <Gap $w={12} />
            <MdMoreVert size={20} />
          </Toolbar>
          <Bookmarks>
            {bookmarks.map((b) => (
              <Bookmark key={b.label} $w={b.w} $gap={b.gap}>
                {b.icon}
                <BookmarkLabel $w={b.w - 30} $ls={b.ls}>{b.label}</BookmarkLabel>
              </Bookmark>
            ))}
            <Spacer />
            <BookmarkLabel $w={8}>»</BookmarkLabel>
          </Bookmarks>
          <Viewport>
            <Page>
              <AdminBar>
                <AdminItem $active $w={101}><MenuBars />Manage</AdminItem>
                <AdminItem><StarGlyph />Shortcuts</AdminItem>
                <AdminItem><PersonGlyph />eram12345</AdminItem>
                <AdminItem><GearGlyph />Devel</AdminItem>
                <Spacer />
                <AdminItem><PencilGlyph size={20} />Edit</AdminItem>
              </AdminBar>
              <Tray>
                {trayItems.map((t) => (
                  <TrayItem key={t}>
                    <svg width="20" height="20" viewBox="0 0 20 20" fill="#787878">{trayGlyphs[t]}</svg>
                    {t}
                  </TrayItem>
                ))}
                <TrayToggle>
                  <svg width="20" height="16" viewBox="0 0 20 16" fill="#bebebe">
                    <path d="M0.500 0.500H4.500V15.500H0.500ZM8 8 13.500 3.500V5.500H19.500V10.500H13.500V12.500Z" />
                  </svg>
                </TrayToggle>
              </Tray>
              <SiteHeader>
                <AccountMenu>
                  <span>My account</span>
                  <span>Log out</span>
                  <ContextButton><PencilGlyph size={15} /></ContextButton>
                </AccountMenu>
                <Branding>
                  <DropLogo />
                  <SiteName>TTN</SiteName>
                </Branding>
                <MainMenu>
                  {menuItems.map((m) => (
                    <MenuTab key={m} $active={m === "Data Display"}>{m}</MenuTab>
                  ))}
                </MainMenu>
              </SiteHeader>
              <Body>
                <Breadcrumb><DottedLink>Home</DottedLink></Breadcrumb>
                <Columns>
                  <Sidebar>
                    <Block $h={93}>
                      <BlockTitle>Search</BlockTitle>
                      <SearchRow>
                        <SearchInput aria-label="Search" />
                        <SearchButton aria-label="Search">
                          <svg width="16" height="16" viewBox="0 0 16 16" fill="none" stroke="#4a4a4a">
                            <circle cx="6" cy="6" r="5" strokeWidth="1.500" />
                            <path d="M9.500 9.500 14.500 14.500" strokeWidth="2.700" />
                          </svg>
                        </SearchButton>
                      </SearchRow>
                    </Block>
                    <Block $h={89}>
                      <BlockTitle>Tools</BlockTitle>
                      <ToolLink><DottedLink>Add content</DottedLink></ToolLink>
                    </Block>
                  </Sidebar>
                  <Content>
                    <PageTitle>Display</PageTitle>
                    <SubTitle>Data from the Register Form</SubTitle>
                    <Rule />
                    <TableCaption>MyTable</TableCaption>
                    <Grid>
                      <colgroup>
                        <col width="76" />
                        <col width="224" />
                        <col width="271" />
                        <col />
                      </colgroup>
                      <thead>
                        <tr><th>id</th><th>name</th><th>phone_number</th><th>email_id</th></tr>
                      </thead>
                      <tbody>
                        {rows.map((r) => (
                          <tr key={r[0]}>{r.map((c) => <td key={c}>{c}</td>)}</tr>
                        ))}
                      </tbody>
                    </Grid>
                  </Content>
                </Columns>
              </Body>
              <Footer />
            </Page>
            <ScrollBar>
              <ScrollArrow>
                <svg width="8" height="4" viewBox="0 0 8 4"><path d="M0 4 4 0 8 4Z" fill="#a3a3a3" /></svg>
              </ScrollArrow>
              <Thumb />
              <ScrollArrow>
                <svg width="8" height="4" viewBox="0 0 8 4"><path d="M0 0 4 4 8 0Z" fill="#505050" /></svg>
              </ScrollArrow>
            </ScrollBar>
          </Viewport>
        </Browser>
      </Workspace>
    </Desktop>
  );
}
